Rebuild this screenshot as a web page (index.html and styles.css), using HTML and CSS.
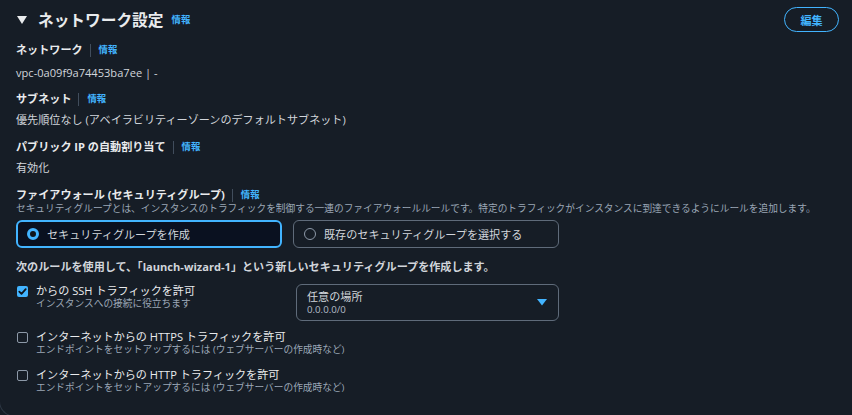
FILE: index.html
```html
<!DOCTYPE html>
<html lang="ja">
<head>
    <meta charset="UTF-8">
    <title>ネットワーク設定</title>
    <link rel="stylesheet" href="styles.css">
</head>
<body>
    <div class="panel">
        <div class="panel-head">
            <h2 class="panel-title">
                <svg class="caret" width="10" height="8" viewBox="0 0 10 8"><path d="M0 0h10L5 8z" fill="#e9ebed"/></svg>
                ネットワーク設定
                <a class="info">情報</a>
            </h2>
            <button class="edit-btn">編集</button>
        </div>

        <div class="field network">
            <div class="label">ネットワーク<span class="sep"></span><a class="info">情報</a></div>
            <div class="value">vpc-0a09f9a74453ba7ee | -</div>
        </div>

        <div class="field subnet">
            <div class="label">サブネット<span class="sep"></span><a class="info">情報</a></div>
            <div class="value">優先順位なし (アベイラビリティーゾーンのデフォルトサブネット)</div>
        </div>

        <div class="field">
            <div class="label">パブリック IP の自動割り当て<span class="sep"></span><a class="info">情報</a></div>
            <div class="value">有効化</div>
        </div>

        <div class="field firewall">
            <div class="label">ファイアウォール (セキュリティグループ)<span class="sep"></span><a class="info">情報</a></div>
            <div class="desc">セキュリティグループとは、インスタンスのトラフィックを制御する一連のファイアウォールルールです。特定のトラフィックがインスタンスに到達できるようにルールを追加します。</div>
            <div class="tiles">
                <label class="tile selected"><span class="radio on"></span>セキュリティグループを作成</label>
                <label class="tile"><span class="radio"></span>既存のセキュリティグループを選択する</label>
            </div>
        </div>

        <p class="rule-note">次のルールを使用して、「launch-wizard-1」という新しいセキュリティグループを作成します。</p>

        <div class="rule ssh">
            <div class="check-row">
                <span class="checkbox on">
                    <svg width="11" height="11" viewBox="0 0 11 11"><path d="M2.3 5.6l2.2 2.2 4.2-4.6" fill="none" stroke="#0f141a" stroke-width="1.8" stroke-linecap="round" stroke-linejoin="round"/></svg>
                </span>
                <div>
                    <div class="check-label">からの SSH トラフィックを許可</div>
                    <div class="check-desc">インスタンスへの接続に役立ちます</div>
                </div>
            </div>
            <div class="select">
                <div>
                    <div class="select-label">任意の場所</div>
                    <div class="select-desc">0.0.0.0/0</div>
                </div>
                <svg width="10" height="7" viewBox="0 0 10 7"><path d="M0 0h10L5 6.5z" fill="#42b4ff"/></svg>
            </div>
        </div>

        <div class="rule https">
            <div class="check-row">
                <span class="checkbox"></span>
                <div>
                    <div class="check-label">インターネットからの HTTPS トラフィックを許可</div>
                    <div class="check-desc">エンドポイントをセットアップするには (ウェブサーバーの作成時など)</div>
                </div>
            </div>
        </div>

        <div class="rule http">
            <div class="check-row">
                <span class="checkbox"></span>
                <div>
                    <div class="check-label">インターネットからの HTTP トラフィックを許可</div>
                    <div class="check-desc">エンドポイントをセットアップするには (ウェブサーバーの作成時など)</div>
                </div>
            </div>
        </div>
    </div>
</body>
</html>
```

FILE: styles.css
```css
body {
    margin: 0;
    background-color: #161d26;
    font-family: "Open Sans", "Noto Sans CJK JP", sans-serif;
    color: #d1d5db;
    font-size: 11.1px;
}

.panel {
    height: 399px;
    padding: 0 13px 17px 16px;
    border-left: 1px solid #2c3642;
    border-bottom: 1px solid #2c3642;
    border-bottom-left-radius: 16px;
    margin-left: -1px;
}

.panel-head {
    display: flex;
    justify-content: space-between;
    align-items: center;
    padding-top: 7px;
}

.panel-title {
    display: flex;
    align-items: center;
    margin: 0;
    font-size: 15.7px;
    line-height: 24px;
    font-weight: bold;
    color: #e9ebed;
}

.caret {
    margin: 0 11px 0 1px;
}

.panel-title .info {
    margin-left: 8px;
}

.info {
    color: #42b4ff;
    font-size: 9.4px;
    font-weight: bold;
    cursor: pointer;
}

.edit-btn {
    width: 55px;
    height: 25px;
    border: 1.5px solid #42b4ff;
    border-radius: 13px;
    background: transparent;
    color: #42b4ff;
    font-family: inherit;
    font-size: 11px;
    font-weight: bold;
    padding: 0;
}

/* label/value pairs */
.field {
    margin-top: 11px;
}

.field.network {
    margin-top: 10px;
}

.field.subnet {
    margin-top: 10px;
}

.label {
    display: flex;
    align-items: center;
    line-height: 16px;
    font-weight: bold;
    color: #e9ebed;
}

.sep {
    width: 1px;
    height: 13px;
    background-color: #414d5c;
    margin: 0 8px 0 7px;
}

.value {
    margin-top: 5px;
    line-height: 16px;
}

.network .value {
    margin-top: 7px;
}

.desc {
    font-size: 9.7px;
    line-height: 12px;
    color: #9ba7b6;
}

.tiles {
    display: flex;
    gap: 11px;
    margin-top: 5px;
}

.tile {
    box-sizing: border-box;
    display: flex;
    align-items: center;
    width: 266px;
    height: 28px;
    padding-left: 10px;
    border: 1px solid #5f6b7a;
    border-radius: 6px;
    color: #d1d5db;
}

.tile.selected {
    border: 2px solid #42b4ff;
    padding-left: 9px;
    background-color: #0a1120;
}

.radio {
    box-sizing: border-box;
    width: 12px;
    height: 12px;
    border-radius: 50%;
    border: 1.5px solid #8d99a8;
    margin-right: 8px;
}

.radio.on {
    border: 3.5px solid #42b4ff;
    background-color: #0f141a;
}

.rule-note {
    margin: 11px 0 0;
    line-height: 16px;
    font-weight: bold;
    color: #d1d5db;
}

/* inbound rule checkboxes */
.rule {
    display: flex;
}

.ssh {
    margin-top: 9px;
}

.ssh .check-row {
    width: 280px;
}

.https {
    margin-top: 9px;
}

.http {
    margin-top: 12px;
}

.check-row {
    display: flex;
    align-items: flex-start;
}

.checkbox {
    box-sizing: border-box;
    display: flex;
    width: 11px;
    height: 11px;
    margin: 2px 8px 0 1px;
    border: 1px solid #8d99a8;
    border-radius: 2px;
}

.checkbox.on {
    border: none;
    background-color: #42b4ff;
}

.check-label {
    line-height: 14px;
    color: #e9ebed;
}

.check-desc {
    font-size: 9.7px;
    line-height: 12px;
    color: #9ba7b6;
}

.select {
    box-sizing: border-box;
    display: flex;
    justify-content: space-between;
    align-items: center;
    width: 263px;
    height: 37px;
    padding: 0 11px 0 10px;
    border: 1px solid #5f6b7a;
    border-radius: 6px;
}

.select-label {
    line-height: 14px;
    color: #d1d5db;
}

.select-desc {
    font-size: 9.7px;
    line-height: 12px;
    color: #b4bcc6;
}
```
